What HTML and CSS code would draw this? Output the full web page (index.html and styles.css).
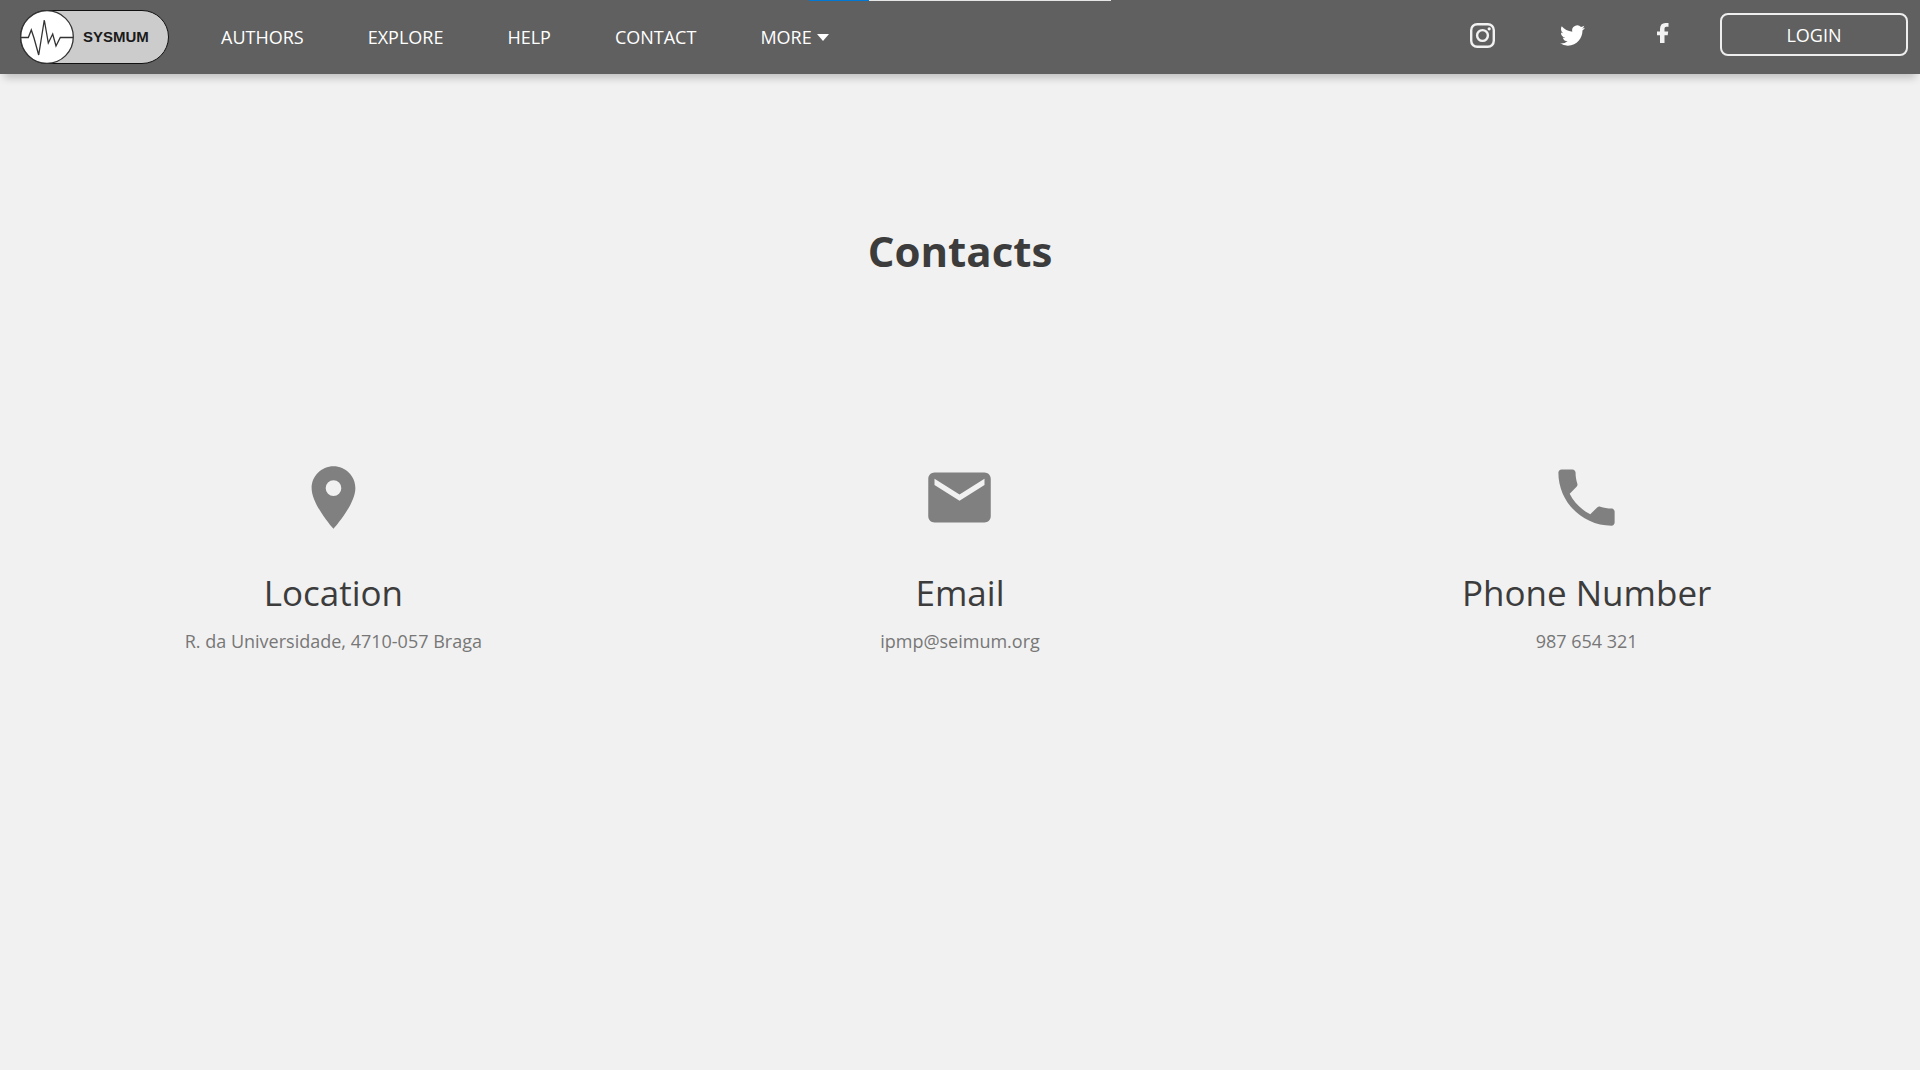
FILE: index.html
```html
<!DOCTYPE html>
<html lang="en">
<head>
<meta charset="utf-8">
<meta name="viewport" content="width=device-width, initial-scale=1">
<title>Contacts</title>
<link rel="stylesheet" href="styles.css">
</head>
<body>
<header class="topbar">
  <a class="logo" href="#" aria-label="Home">
    <svg class="logo-mark" viewBox="0 0 54 54" aria-hidden="true">
      <circle cx="27" cy="27" r="26.300" fill="#fff" stroke="#333" stroke-width="1.300"/>
      <path d="M1 27.500H8.300L11.300 20L14 28L18.700 45L24.300 10L28.300 33L32.700 24L36 36L40.300 27.500H53" fill="none" stroke="#333" stroke-width="1.300"/>
    </svg>
    <span class="logo-text">SYSMUM</span>
  </a>
  <nav class="menu">
    <a class="menu-link" href="#">AUTHORS</a>
    <a class="menu-link" href="#">EXPLORE</a>
    <a class="menu-link" href="#">HELP</a>
    <a class="menu-link" href="#">CONTACT</a>
    <a class="menu-link" href="#">MORE<span class="caret"></span></a>
  </nav>
  <div class="social">
    <a class="social-link" href="#" aria-label="Instagram">
      <svg class="social-icon" viewBox="0 0 25 25" fill="none" stroke="#f2f2f2">
        <rect x="1.200" y="1.200" width="22.600" height="22.600" rx="6" stroke-width="2.400"/>
        <circle cx="12.500" cy="12.500" r="5.400" stroke-width="2.400"/>
        <circle cx="19.200" cy="5.800" r="1.600" fill="#f2f2f2" stroke="none"/>
      </svg>
    </a>
    <a class="social-link" href="#" aria-label="Twitter">
      <svg class="social-icon" viewBox="0 0 24 24" fill="#fff">
        <path d="M23.950 4.570a10 10 0 0 1-2.820.770 4.960 4.960 0 0 0 2.160-2.720c-.950.560-2 .960-3.120 1.180a4.920 4.920 0 0 0-8.390 4.490C7.690 8.090 4.070 6.130 1.640 3.160a4.820 4.820 0 0 0-.670 2.480c0 1.710.870 3.210 2.190 4.100a4.900 4.900 0 0 1-2.230-.620v.060a4.920 4.920 0 0 0 3.950 4.830 5 5 0 0 1-2.210.080 4.940 4.940 0 0 0 4.600 3.420A9.870 9.870 0 0 1 0 19.540a14 14 0 0 0 7.550 2.210c9.050 0 14-7.500 14-13.980 0-.210 0-.420-.020-.630a9.940 9.940 0 0 0 2.460-2.550z"/>
      </svg>
    </a>
    <a class="social-link" href="#" aria-label="Facebook">
      <svg class="social-icon" viewBox="0 0 25 25" fill="#f2f2f2">
        <path d="M10 20V12.200H7V8.400H10V6Q10 0 15.500 0H18.500V3.700H16.300Q14.500 3.700 14.500 5.500V8.400H18.200L17.700 12.200H14.500V20Z"/>
      </svg>
    </a>
  </div>
  <button class="login" type="button">LOGIN</button>
  <div class="progress"><div class="progress-fill"></div></div>
</header>
<main class="page">
  <h1 class="title">Contacts</h1>
  <div class="contacts">
    <section class="contact">
      <svg class="contact-icon" viewBox="0 0 24 24" aria-hidden="true"><path d="M12 2C8.130 2 5 5.130 5 9c0 5.250 7 13 7 13s7-7.750 7-13c0-3.870-3.130-7-7-7zm0 9.500a2.500 2.500 0 0 1 0-5 2.500 2.500 0 0 1 0 5z"/></svg>
      <h2 class="contact-name">Location</h2>
      <p class="contact-text">R. da Universidade, 4710-057 Braga</p>
    </section>
    <section class="contact">
      <svg class="contact-icon" viewBox="0 0 24 24" aria-hidden="true"><path d="M20 4H4c-1.100 0-1.990.900-1.990 2L2 18c0 1.100.900 2 2 2h16c1.100 0 2-.900 2-2V6c0-1.100-.900-2-2-2zm0 4l-8 5-8-5V6l8 5 8-5v2z"/></svg>
      <h2 class="contact-name">Email</h2>
      <p class="contact-text">ipmp@seimum.org</p>
    </section>
    <section class="contact">
      <svg class="contact-icon" viewBox="0 0 24 24" aria-hidden="true"><path d="M6.620 10.790c1.440 2.830 3.760 5.140 6.590 6.590l2.200-2.200c.270-.270.670-.360 1.020-.240 1.120.370 2.330.570 3.570.570.550 0 1 .450 1 1V20c0 .550-.450 1-1 1-9.390 0-17-7.610-17-17 0-.550.450-1 1-1h3.500c.550 0 1 .450 1 1 0 1.250.200 2.450.570 3.570.110.350.030.740-.250 1.020l-2.200 2.200z"/></svg>
      <h2 class="contact-name">Phone Number</h2>
      <p class="contact-text">987 654 321</p>
    </section>
  </div>
</main>
</body>
</html>
```
FILE: styles.css
```css
* {
  box-sizing: border-box;
}

body {
  margin: 0;
  min-height: 100vh;
  display: flex;
  flex-direction: column;
  background: #fff;
  color: #3c3c3c;
  font-family: "Open Sans", "Noto Sans", sans-serif;
  font-size: 18px;
  line-height: 24px;
}

a {
  color: inherit;
  text-decoration: none;
}

.topbar {
  position: relative;
  display: flex;
  align-items: flex-start;
  height: 74px;
  padding: 0 12px 0 20px;
  background: #606060;
  color: #fff;
  box-shadow: 0 8px 8px -4px rgba(0, 0, 0, 0.2);
}

.logo {
  display: flex;
  align-items: center;
  gap: 9px;
  width: 149px;
  height: 54px;
  margin: 10px 52px 0 0;
  border: 1px solid #111;
  border-radius: 27px;
  background: #ccc;
  color: #1a1a1a;
}

.logo-mark {
  flex: none;
  width: 54px;
  height: 54px;
  margin-left: -1px;
}

.logo-text {
  font-family: "Liberation Sans", Arial, sans-serif;
  font-size: 15px;
  font-weight: bold;
}

.menu {
  display: flex;
  gap: 64px;
  margin: 25px auto 0 0;
}

.menu-link {
  display: flex;
  align-items: center;
}

.caret {
  margin-left: 5px;
  border: 6px solid transparent;
  border-top: 7px solid #fff;
  border-bottom: 0;
}

.social {
  display: flex;
  gap: 65px;
  margin: 23px 45px 0 0;
}

.social-icon {
  display: block;
  width: 25px;
  height: 25px;
}

.login {
  width: 188px;
  height: 43px;
  margin-top: 13px;
  padding: 0;
  border: 2px solid #eee;
  border-radius: 8px;
  background: transparent;
  color: #fff;
  font: inherit;
}

.progress {
  position: absolute;
  top: 0;
  right: 0;
  left: 0;
  width: 302px;
  height: 1px;
  margin: 0 auto;
  background: #e6e6e6;
}

.progress-fill {
  width: 20%;
  height: 100%;
  background: #0078d4;
}

.page {
  flex: 1;
  margin-bottom: 10px;
  padding: 145px 20px 0;
  background: #f1f1f1;
  text-align: center;
}

.title {
  margin: 0 0 177px;
  font-size: 42px;
  font-weight: bold;
  line-height: 64px;
}

.contacts {
  display: grid;
  grid-template-columns: repeat(3, 1fr);
}

.contact-icon {
  display: block;
  width: 75px;
  height: 75px;
  margin: 0 auto 32px;
  fill: #808080;
}

.contact-name {
  margin: 0 0 10px;
  font-size: 35px;
  font-weight: normal;
  line-height: 52px;
}

.contact-text {
  margin: 0;
  color: #777;
}
```
